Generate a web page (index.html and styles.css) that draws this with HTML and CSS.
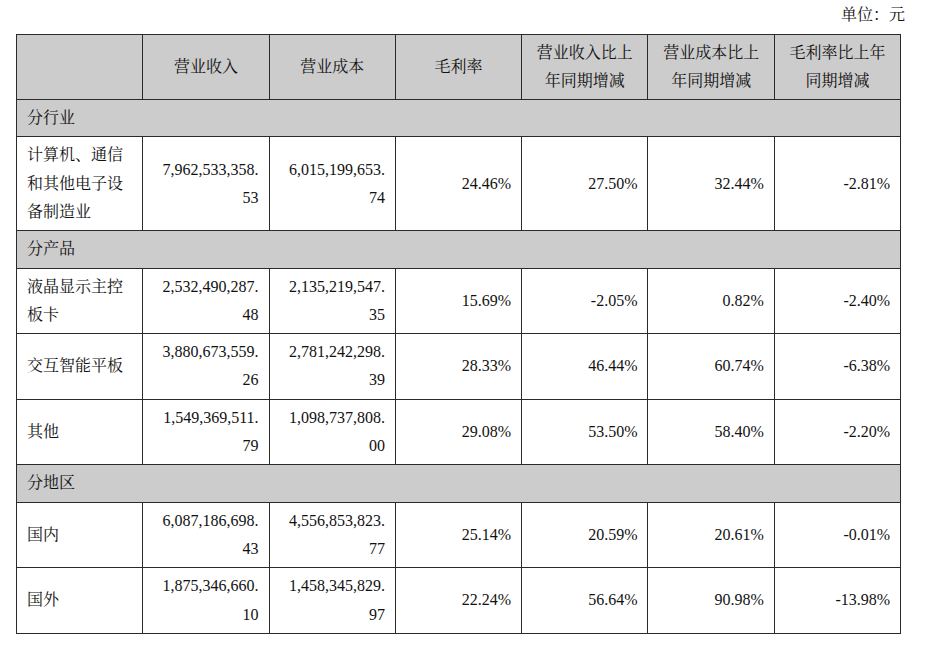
FILE: index.html
```html
<!DOCTYPE html>
<html lang="zh-CN">
<head>
<meta charset="utf-8">
<title>营业收入构成</title>
<link rel="stylesheet" href="styles.css">
</head>
<body>
<div class="page">
  <div class="unit">单位：元</div>
  <table class="report">
    <colgroup>
      <col class="c"><col class="c"><col class="c"><col class="c"><col class="c"><col class="c"><col class="c">
    </colgroup>
    <thead>
      <tr class="head">
        <th></th>
        <th>营业收入</th>
        <th>营业成本</th>
        <th>毛利率</th>
        <th>营业收入比上<br>年同期增减</th>
        <th>营业成本比上<br>年同期增减</th>
        <th>毛利率比上年<br>同期增减</th>
      </tr>
    </thead>
    <tbody>
      <tr class="section"><td colspan="7">分行业</td></tr>
      <tr>
        <td class="name">计算机、通信<br>和其他电子设<br>备制造业</td>
        <td class="num">7,962,533,358.<br>53</td>
        <td class="num">6,015,199,653.<br>74</td>
        <td class="num">24.46%</td>
        <td class="num">27.50%</td>
        <td class="num">32.44%</td>
        <td class="num">-2.81%</td>
      </tr>
      <tr class="section"><td colspan="7">分产品</td></tr>
      <tr>
        <td class="name">液晶显示主控<br>板卡</td>
        <td class="num">2,532,490,287.<br>48</td>
        <td class="num">2,135,219,547.<br>35</td>
        <td class="num">15.69%</td>
        <td class="num">-2.05%</td>
        <td class="num">0.82%</td>
        <td class="num">-2.40%</td>
      </tr>
      <tr>
        <td class="name">交互智能平板</td>
        <td class="num">3,880,673,559.<br>26</td>
        <td class="num">2,781,242,298.<br>39</td>
        <td class="num">28.33%</td>
        <td class="num">46.44%</td>
        <td class="num">60.74%</td>
        <td class="num">-6.38%</td>
      </tr>
      <tr>
        <td class="name">其他</td>
        <td class="num">1,549,369,511.<br>79</td>
        <td class="num">1,098,737,808.<br>00</td>
        <td class="num">29.08%</td>
        <td class="num">53.50%</td>
        <td class="num">58.40%</td>
        <td class="num">-2.20%</td>
      </tr>
      <tr class="section"><td colspan="7">分地区</td></tr>
      <tr>
        <td class="name">国内</td>
        <td class="num">6,087,186,698.<br>43</td>
        <td class="num">4,556,853,823.<br>77</td>
        <td class="num">25.14%</td>
        <td class="num">20.59%</td>
        <td class="num">20.61%</td>
        <td class="num">-0.01%</td>
      </tr>
      <tr>
        <td class="name">国外</td>
        <td class="num">1,875,346,660.<br>10</td>
        <td class="num">1,458,345,829.<br>97</td>
        <td class="num">22.24%</td>
        <td class="num">56.64%</td>
        <td class="num">90.98%</td>
        <td class="num">-13.98%</td>
      </tr>
    </tbody>
  </table>
</div>
</body>
</html>
```

FILE: styles.css
```css
html, body {
  margin: 0;
  padding: 0;
  background: #ffffff;
}

body {
  font-family: "Liberation Serif", "Noto Serif CJK SC", "Noto Sans CJK SC", serif;
  font-size: 16px;
  color: #111111;
}

.page {
  padding: 1px 0 0 16px;
  width: 889px;
}

.unit {
  text-align: right;
  line-height: 28px;
  height: 28px;
  margin-bottom: 4.5px;
}

.report {
  border-collapse: collapse;
  table-layout: fixed;
  width: 884px;
}

.report col.c {
  width: 126.3px;
}

.report th,
.report td {
  border: 1px solid #2a2a2a;
  padding: 4px 10px;
  line-height: 28.3px;
  vertical-align: middle;
  font-weight: normal;
}

.report th {
  background: #cccccc;
  text-align: center;
}

.report .section td {
  background: #cccccc;
  text-align: left;
}

.report .name {
  text-align: left;
}

.report .num {
  text-align: right;
}
```
